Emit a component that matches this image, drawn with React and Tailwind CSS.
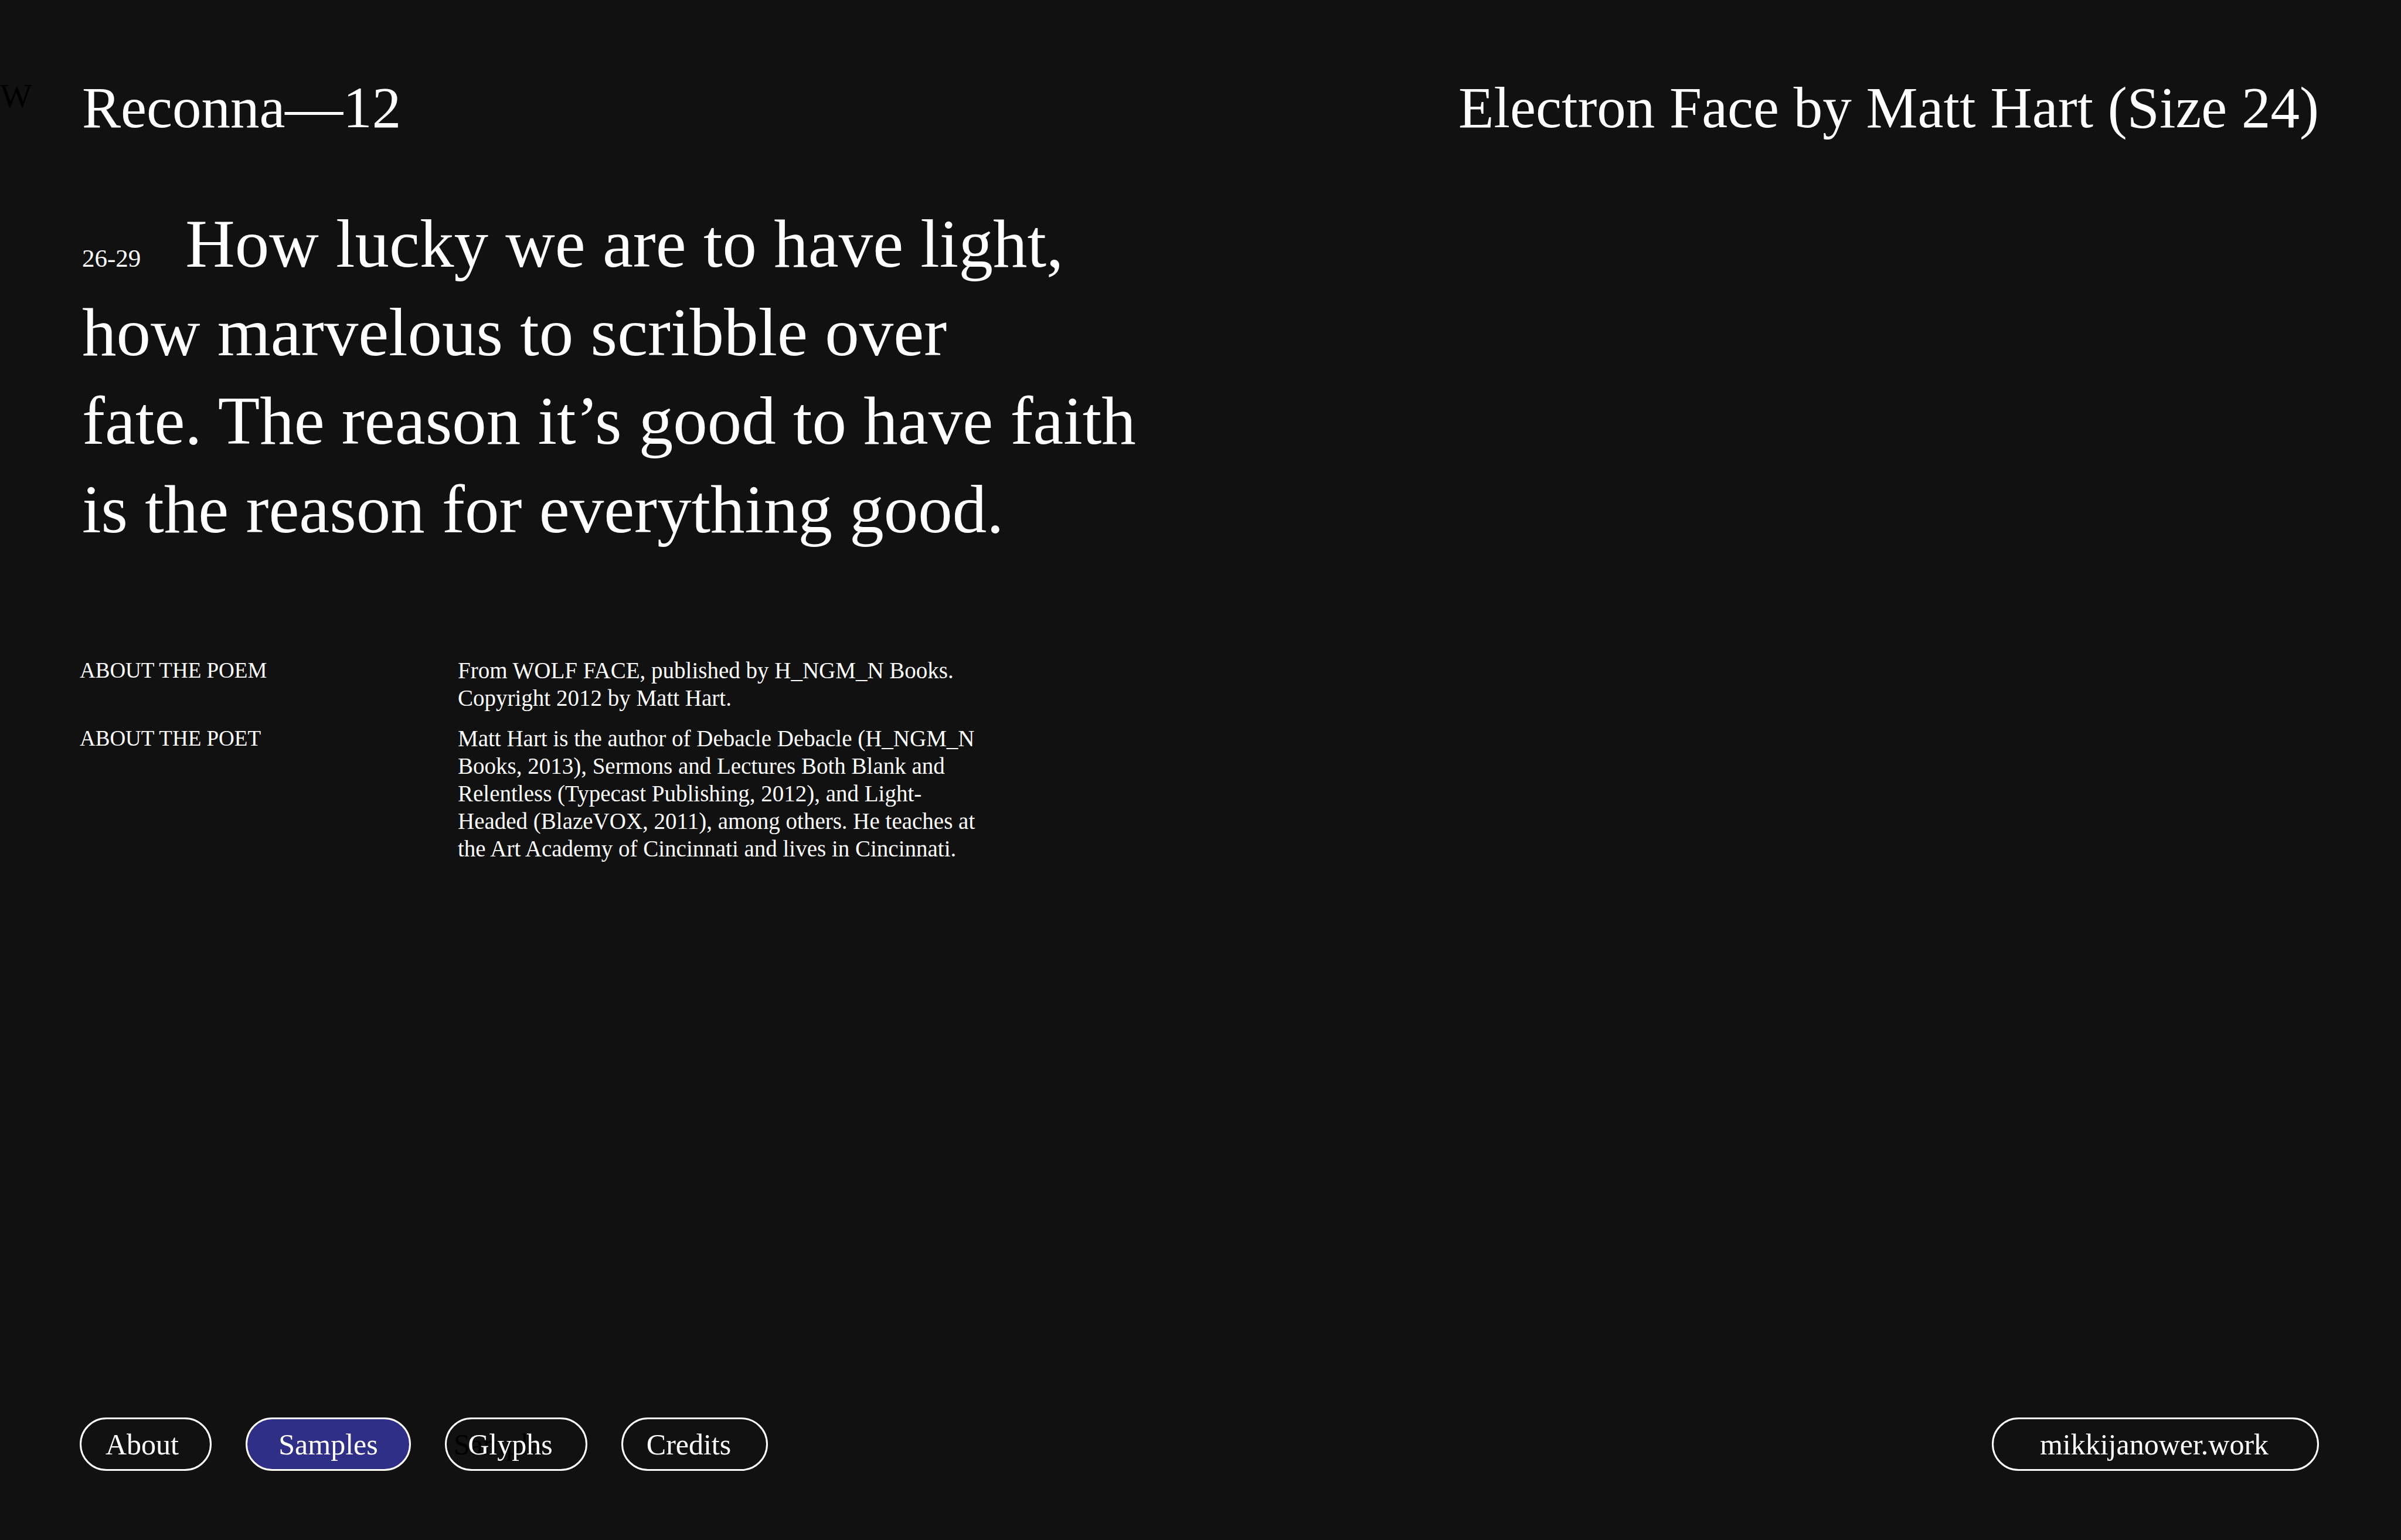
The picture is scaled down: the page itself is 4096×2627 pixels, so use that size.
const poem = [
  "how marvelous to scribble over",
  "fate. The reason it’s good to have faith",
  "is the reason for everything good.",
];

const notes = [
  {
    term: "ABOUT THE POEM",
    lines: [
      "From WOLF FACE, published by H_NGM_N Books.",
      "Copyright 2012 by Matt Hart.",
    ],
  },
  {
    term: "ABOUT THE POET",
    lines: [
      "Matt Hart is the author of Debacle Debacle (H_NGM_N",
      "Books, 2013), Sermons and Lectures Both Blank and",
      "Relentless (Typecast Publishing, 2012), and Light-",
      "Headed (BlazeVOX, 2011), among others. He teaches at",
      "the Art Academy of Cincinnati and lives in Cincinnati.",
    ],
  },
];

const pill =
  "h-[91px] rounded-full border-3 border-white text-[50px] leading-[87px] whitespace-nowrap";

export default function App() {
  return (
    <div className="relative flex min-h-screen flex-col bg-[#111111] px-[136px] pt-[128px] pb-[118px] font-['Liberation_Serif',serif] text-white">
      <span aria-hidden="true" className="absolute top-[128px] left-0 text-[58px] leading-[72px] text-black">
        W
      </span>

      <header className="flex items-start justify-between px-1 text-[99px] leading-[112px]">
        <h1>Reconna—12</h1>
        <p>Electron Face by Matt Hart (Size 24)</p>
      </header>

      <main className="grow">
        <p className="mt-[100px] px-1 text-[117px] leading-[151px]">
          <span className="flex items-baseline gap-[76px]">
            <span className="text-[43px] leading-none">26-29</span>
            <span>How lucky we are to have light,</span>
          </span>
          {poem.map((line) => (
            <span key={line} className="block">
              {line}
            </span>
          ))}
        </p>

        <dl className="mt-[176px] grid grid-cols-[645px_1fr] gap-y-[22px] text-[39px] leading-[47px]">
          {notes.map(({ term, lines }) => (
            <div key={term} className="contents">
              <dt className="text-[37px]">{term}</dt>
              <dd>
                {lines.map((line) => (
                  <span key={line} className="block">
                    {line}
                  </span>
                ))}
              </dd>
            </div>
          ))}
        </dl>
      </main>

      <footer className="flex items-center justify-between pr-1">
        <nav className="flex gap-[58px]">
          <button className={`${pill} w-[225px] pr-3`}>About</button>
          <button className={`${pill} w-[282px] bg-[#302f87]`}>Samples</button>
          <button className={`${pill} relative w-[243px] pr-5`}>
            <span aria-hidden="true" className="absolute left-3 text-black">
              Samples
            </span>
            <span className="relative">Glyphs</span>
          </button>
          <button className={`${pill} w-[250px] pr-5`}>Credits</button>
        </nav>
        <a href="https://mikkijanower.work" className={`${pill} w-[558px] pr-1 text-center`}>
          mikkijanower.work
        </a>
      </footer>
    </div>
  );
}
